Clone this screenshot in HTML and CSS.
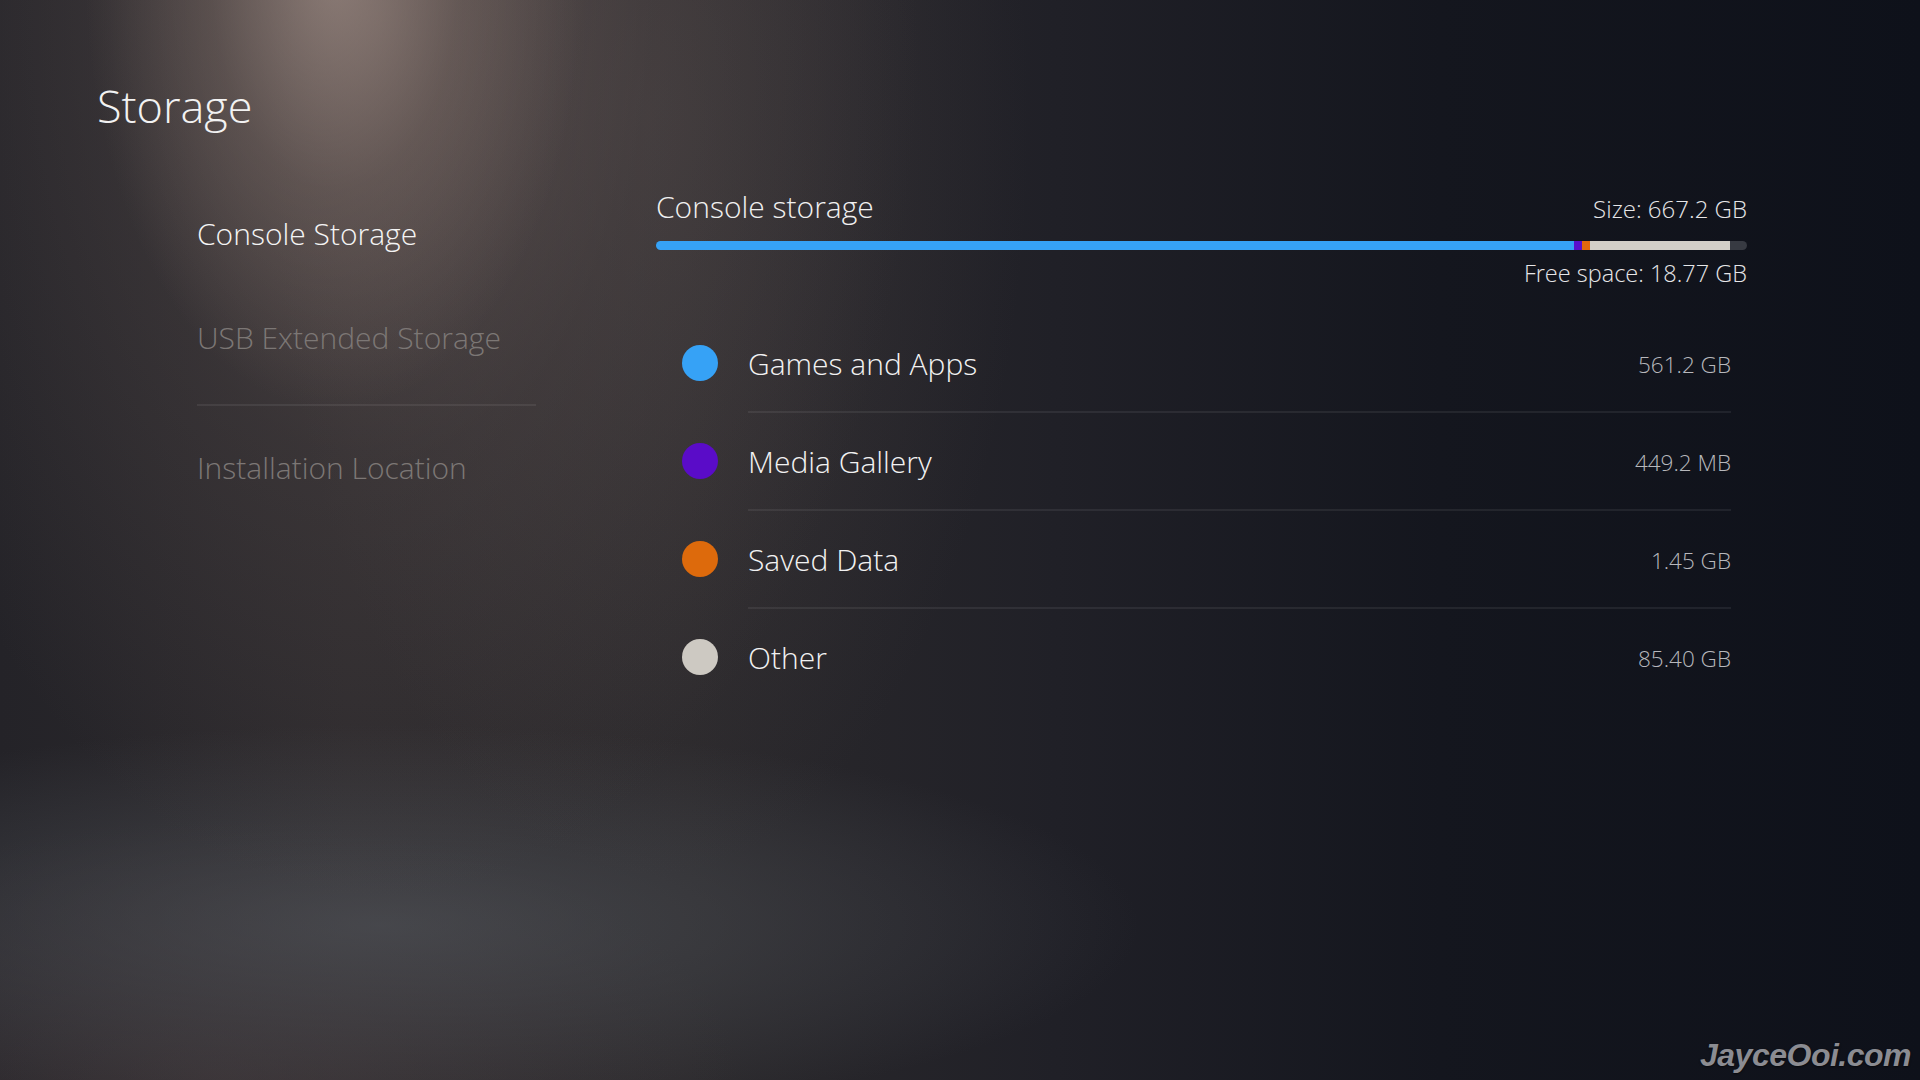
FILE: index.html
```html
<!DOCTYPE html>
<html lang="en">
<head>
<meta charset="utf-8">
<title>Storage</title>
<link rel="stylesheet" href="styles.css">
</head>
<body>
<div class="screen">
  <div class="bg-spot"></div>
  <header class="title">Storage</header>
  <div class="main">
    <nav class="nav">
      <div class="nav-item active">Console Storage</div>
      <div class="nav-item dim second">USB Extended Storage</div>
      <div class="nav-divider"></div>
      <div class="nav-item dim third">Installation Location</div>
    </nav>
    <section class="panel">
      <div class="panel-head">
        <div class="panel-title">Console storage</div>
        <div class="panel-size">Size: 667.2 GB</div>
      </div>
      <div class="bar">
        <div class="seg seg-blue" style="width:918px"></div>
        <div class="seg seg-purple" style="width:8px"></div>
        <div class="seg seg-orange" style="width:8px"></div>
        <div class="seg seg-beige" style="width:140px"></div>
      </div>
      <div class="free">Free space: 18.77 GB</div>
      <ul class="list">
        <li class="row">
          <span class="dot dot-blue"></span>
          <div class="row-body"><span class="label">Games and Apps</span><span class="value">561.2 GB</span></div>
        </li>
        <li class="row">
          <span class="dot dot-purple"></span>
          <div class="row-body"><span class="label">Media Gallery</span><span class="value">449.2 MB</span></div>
        </li>
        <li class="row">
          <span class="dot dot-orange"></span>
          <div class="row-body"><span class="label">Saved Data</span><span class="value">1.45 GB</span></div>
        </li>
        <li class="row last">
          <span class="dot dot-beige"></span>
          <div class="row-body"><span class="label">Other</span><span class="value">85.40 GB</span></div>
        </li>
      </ul>
    </section>
  </div>
  <div class="watermark">JayceOoi.com</div>
</div>
</body>
</html>
```

FILE: styles.css
```css
* { box-sizing: border-box; }
html, body { margin: 0; padding: 0; }
body {
  width: 1920px;
  height: 1080px;
  overflow: hidden;
  font-family: "Open Sans", "Noto Sans", sans-serif;
  font-weight: 300;
  color: #f0f0f0;
  background: #14161d;
}
.screen {
  position: relative;
  width: 1920px;
  height: 1080px;
  overflow: hidden;
  background:
    radial-gradient(ellipse 760px 200px at 380px 925px, rgba(84,88,94,0.6), rgba(84,88,94,0) 100%),
    radial-gradient(ellipse 520px 260px at 220px 1080px, rgba(72,60,62,0.5), rgba(72,60,62,0) 100%),
    linear-gradient(90deg, #242328 0%, #2d2a2d 18%, #2b292c 36%, #202027 55%, #14161e 75%, #0e111a 100%);
}
.bg-spot {
  position: absolute;
  inset: 0;
  pointer-events: none;
  background:
    radial-gradient(ellipse 250px 440px at 335px -30px, rgba(165,146,138,0.68), rgba(140,122,114,0.32) 50%, rgba(120,100,95,0) 100%),
    radial-gradient(ellipse 540px 880px at 380px 20px, rgba(120,104,100,0.55), rgba(100,88,86,0.24) 50%, rgba(80,70,70,0) 100%),
    radial-gradient(ellipse 380px 760px at 650px 120px, rgba(92,82,82,0.32), rgba(92,82,82,0) 100%);
}
.title {
  position: relative;
  padding: 80px 0 0 97px;
  font-size: 45px;
  line-height: 52px;
  color: #f2f2f2;
}
.main {
  position: relative;
  display: flex;
  margin-top: 59px;
}
.nav {
  width: 339px;
  margin-left: 197px;
  margin-top: 23px;
  display: flex;
  flex-direction: column;
}
.nav-item {
  font-size: 30px;
  line-height: 40px;
  white-space: nowrap;
}
.nav-item.active { color: #f4f4f4; }
.nav-item.dim { color: #7c7775; }
.nav-item.second { margin-top: 64px; }
.nav-divider {
  height: 2px;
  margin-top: 46px;
  background: rgba(255,255,255,0.07);
}
.nav-item.third { margin-top: 42px; }

.panel {
  width: 1091px;
  margin-left: 120px;
  display: flex;
  flex-direction: column;
}
.panel-head {
  display: flex;
  justify-content: space-between;
  align-items: baseline;
  margin-top: -2px;
}
.panel-title {
  font-size: 30px;
  line-height: 36px;
  color: #f0f0f0;
}
.panel-size {
  font-size: 24px;
  color: #e6e6e8;
}
.bar {
  display: flex;
  height: 9px;
  margin-top: 16px;
  border-radius: 5px;
  overflow: hidden;
  background: #373a42;
}
.seg { height: 100%; flex: none; }
.seg-blue { background: #36a2f6; }
.seg-purple { background: #5a10cc; }
.seg-orange { background: #e3680c; }
.seg-beige { background: #d3cfc8; }
.free {
  align-self: flex-end;
  margin-top: 7px;
  font-size: 23.5px;
  line-height: 32px;
  color: #e6e6e8;
}
.list {
  list-style: none;
  margin: 26px 0 0 26px;
  padding: 0;
  width: 1049px;
}
.row {
  display: flex;
  align-items: center;
  height: 98px;
}
.dot {
  flex: none;
  width: 36px;
  height: 36px;
  border-radius: 50%;
  margin-right: 30px;
  margin-top: -2px;
}
.dot-blue { background: #36a2f6; }
.dot-purple { background: #5a0cc8; }
.dot-orange { background: #dd6a0c; }
.dot-beige { background: #cdc9c2; }
.row-body {
  flex: 1;
  height: 100%;
  display: flex;
  align-items: center;
  justify-content: space-between;
  border-bottom: 2px solid rgba(255,255,255,0.07);
}
.row.last .row-body { border-bottom-color: transparent; }
.label {
  font-size: 30px;
  color: #f2f2f2;
}
.value {
  font-size: 22.5px;
  color: #b7b8bc;
  padding-top: 2px;
}
.watermark {
  position: absolute;
  right: 9px;
  bottom: 6px;
  font-family: "Liberation Sans", Arial, sans-serif;
  font-weight: 700;
  font-style: italic;
  font-size: 32px;
  letter-spacing: -0.5px;
  color: #8b8c92;
  text-shadow: 0 1px 2px rgba(0,0,0,0.6);
}
```
